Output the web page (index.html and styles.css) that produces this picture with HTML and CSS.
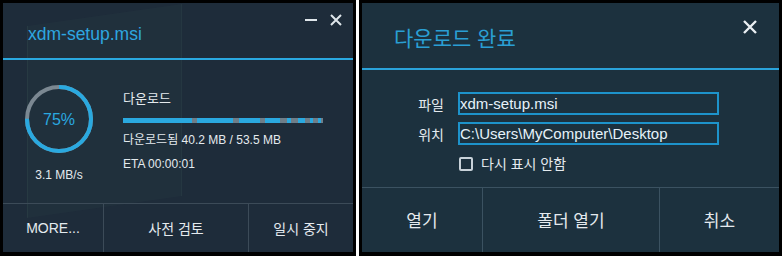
FILE: index.html
```html
<!DOCTYPE html>
<html lang="ko">
<head>
  <meta charset="UTF-8" />
  <title>XDM</title>
  <link rel="stylesheet" href="styles.css">
</head>
<body>

  <!-- Download progress window -->
  <div class="win progress-win">
    <div class="glass"></div>
    <div class="head">
      <div class="title">xdm-setup.msi</div>
      <div class="controls">
        <svg class="ctl" width="12" height="12" viewBox="0 0 12 12"><path d="M0 6H12" stroke="#dfe6eb" stroke-width="2"/></svg>
        <svg class="ctl" width="12" height="12" viewBox="0 0 12 12"><path d="M1 1L11 11M11 1L1 11" stroke="#dfe6eb" stroke-width="2"/></svg>
      </div>
    </div>

    <div class="main">
      <div class="gauge">
        <svg width="68" height="68" viewBox="0 0 68 68">
          <circle cx="34" cy="34" r="32" fill="none" stroke="#7b8892" stroke-width="4"/>
          <circle cx="34" cy="34" r="32" fill="none" stroke="#2aa9e0" stroke-width="4"
                  stroke-dasharray="150.8 201.06" transform="rotate(-90 34 34)"/>
          <text x="34" y="40" text-anchor="middle" class="pct">75%</text>
        </svg>
        <div class="speed">3.1 MB/s</div>
      </div>

      <div class="info">
        <div class="label">다운로드</div>
        <div class="bar">
          <span class="on" style="width:69px"></span><span style="width:5px"></span>
          <span class="on" style="width:36px"></span><span style="width:6px"></span>
          <span class="on" style="width:21px"></span><span style="width:5px"></span>
          <span class="on" style="width:15px"></span><span style="width:7px"></span>
          <span class="on" style="width:4px"></span><span style="width:7px"></span>
          <span class="on" style="width:7px"></span><span style="width:5px"></span>
          <span class="on" style="width:3px"></span><span style="width:5px"></span>
          <span class="on" style="width:3px"></span><span style="width:2px"></span>
        </div>
        <div class="line">다운로드됨 40.2 MB / 53.5 MB</div>
        <div class="line eta">ETA 00:00:01</div>
      </div>
    </div>

    <div class="foot">
      <div class="btn">MORE...</div>
      <div class="btn">사전 검토</div>
      <div class="btn">일시 중지</div>
    </div>
  </div>

  <div class="gap"></div>

  <!-- Download complete window -->
  <div class="win done-win">
    <div class="head">
      <div class="title">다운로드 완료</div>
      <svg class="close" width="14" height="14" viewBox="0 0 14 14"><path d="M1 1L13 13M13 1L1 13" stroke="#e9eef2" stroke-width="2.4"/></svg>
    </div>

    <div class="form">
      <div class="row">
        <div class="key">파일</div>
        <div class="field">xdm-setup.msi</div>
      </div>
      <div class="row">
        <div class="key">위치</div>
        <div class="field">C:\Users\MyComputer\Desktop</div>
      </div>
      <div class="row check">
        <span class="box"></span>
        <span>다시 표시 안함</span>
      </div>
    </div>

    <div class="foot">
      <div class="btn">열기</div>
      <div class="btn">폴더 열기</div>
      <div class="btn">취소</div>
    </div>
  </div>

</body>
</html>
```

FILE: styles.css
```css
* {
  box-sizing: border-box;
  font-family: 'Liberation Sans', 'Noto Sans CJK KR', sans-serif;
}

body {
  margin: 0;
  background: #fff;
  display: flex;
  width: 782px;
  height: 256px;
  overflow: hidden;
}

.win {
  position: relative;
  height: 256px;
  border: 3px solid #000;
  border-bottom-width: 4px;
  display: flex;
  flex-direction: column;
  color: #e4eaee;
  overflow: hidden;
}

.gap {
  width: 3px;
}

/* ---------- progress window ---------- */

.progress-win {
  width: 356px;
  background: #1e2c3a;
}

/* faint wallpaper showing through the glass */
.glass {
  position: absolute;
  left: 24px;
  top: 12px;
  width: 155px;
  height: 192px;
  background: rgba(120, 160, 150, 0.035);
  border-left: 1px solid rgba(120, 170, 140, 0.08);
  border-right: 1px solid rgba(120, 170, 140, 0.06);
  transform: skewY(-8deg);
}

.progress-win .head {
  position: relative;
  height: 57px;
  border-bottom: 2px solid #2aa9e0;
  display: flex;
  justify-content: space-between;
  padding: 21px 11px 0 25px;
}

.progress-win .title {
  color: #2ea7e0;
  font-size: 17.5px;
  line-height: 20px;
}

.controls {
  display: flex;
  gap: 13px;
  margin-top: -10px;
}

.main {
  position: relative;
  flex: 1;
  display: flex;
  align-items: flex-start;
  padding: 25px 0 0 22px;
  gap: 30px;
}

.gauge {
  width: 68px;
  display: flex;
  flex-direction: column;
  align-items: center;
}

.gauge svg {
  display: block;
}

.pct {
  fill: #2aa9e0;
  font-size: 16px;
  font-family: 'Liberation Sans', sans-serif;
}

.speed {
  font-size: 12px;
  line-height: 14px;
  margin-top: 15px;
  white-space: nowrap;
}

.info {
  padding-top: 6px;
}

.label {
  font-size: 13px;
  line-height: 16px;
}

.bar {
  display: flex;
  width: 200px;
  height: 5px;
  margin-top: 11px;
}

.bar span {
  height: 5px;
  background: #6e7e89;
}

.bar span.on {
  background: #2aa9e0;
}

.line {
  font-size: 12px;
  line-height: 16px;
  margin-top: 9px;
  white-space: nowrap;
}

.line.eta {
  margin-top: 8px;
}

.foot {
  position: relative;
  display: grid;
  border-top: 1px solid #3c4b58;
}

.progress-win .foot {
  height: 49px;
  grid-template-columns: 100px 145px 1fr;
}

.btn {
  display: flex;
  align-items: center;
  justify-content: center;
  font-size: 14px;
}

.btn + .btn {
  border-left: 1px solid #3c4b58;
}

/* ---------- done window ---------- */

.done-win {
  width: 423px;
  background: #1c313e;
}

.done-win .head {
  height: 67px;
  border-bottom: 2px solid #2aa3da;
  display: flex;
  justify-content: space-between;
  align-items: flex-start;
  padding: 24px 22px 0 32px;
}

.done-win .title {
  color: #2a9fd3;
  font-size: 21px;
  line-height: 24px;
}

.close {
  margin-top: -7px;
}

.form {
  flex: 1;
  padding: 22px 0 0 0;
  display: flex;
  flex-direction: column;
  gap: 7px;
}

.row {
  display: flex;
  align-items: center;
}

.key {
  width: 82px;
  text-align: right;
  font-size: 14px;
  margin-right: 14px;
}

.field {
  width: 261px;
  height: 23px;
  border: 2px solid #1d93cb;
  font-size: 15px;
  line-height: 19px;
  padding-left: 0;
  color: #e6f2fa;
  white-space: nowrap;
}

.row.check {
  margin-top: 4px;
  padding-left: 97px;
  font-size: 14px;
  line-height: 16px;
}

.box {
  width: 14px;
  height: 14px;
  border: 2px solid #c8d2d9;
  border-radius: 2px;
  margin-right: 8px;
}

.done-win .foot {
  height: 65px;
  grid-template-columns: 120px 177px 1fr;
  border-top-color: #3b5261;
}

.done-win .btn {
  font-size: 17px;
  padding-bottom: 2px;
}

.done-win .btn + .btn {
  border-left-color: #3b5261;
}
```
